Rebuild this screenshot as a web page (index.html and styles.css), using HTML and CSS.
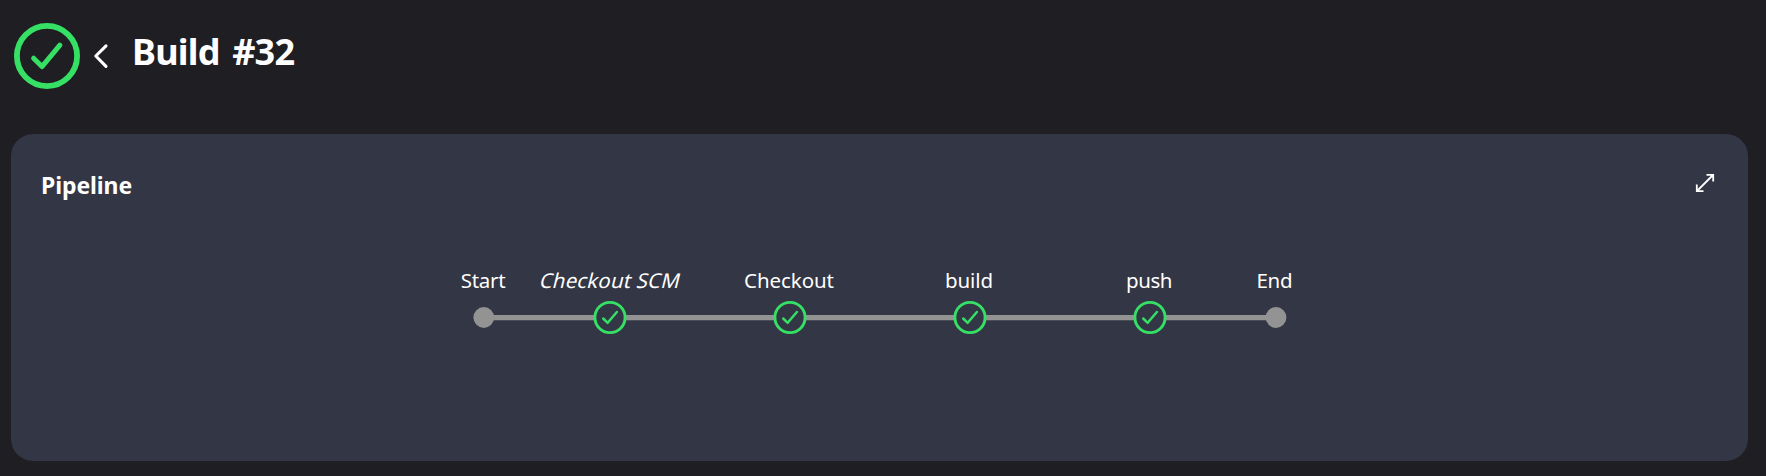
FILE: index.html
```html
<!DOCTYPE html>
<html lang="en">
<head>
<meta charset="utf-8">
<title>Build #32</title>
<link rel="stylesheet" href="styles.css">
</head>
<body>
<header class="build-header">
  <svg class="status-icon" viewBox="0 0 66 66" fill="none">
    <circle cx="33" cy="33" r="30.1" stroke-width="5.8"/>
    <path d="M19.6 35.2 28 43.6 45.9 22.1" stroke-width="5"/>
  </svg>
  <svg class="back-icon" viewBox="0 0 16 26" fill="none"><path d="M13 2.8 2.8 13 13 23.4"/></svg>
  <h1 class="build-title">Build #32</h1>
</header>
<main class="card">
  <div class="card-header">
    <h2 class="card-title">Pipeline</h2>
    <svg class="expand-icon" viewBox="0 0 20 20" fill="none"><path d="M2 18 18 2M11.5 1.8H18.2V8.5M1.8 11.5V18.2H8.5"/></svg>
  </div>
  <svg class="graph" viewBox="0 0 840 80">
    <defs>
      <g id="success">
        <circle class="ring" r="15.1"/>
        <path class="check" d="M-6.8 1-2.3 5.3 6.9-5.5"/>
      </g>
    </defs>
    <path class="edge" d="M33.8 56.6H826"/>
    <circle class="dot" cx="33.8" cy="56.5" r="10.4"/>
    <circle class="dot" cx="826" cy="56.5" r="10.4"/>
    <use href="#success" x="160" y="56.5"/>
    <use href="#success" x="340" y="56.5"/>
    <use href="#success" x="520" y="56.5"/>
    <use href="#success" x="700" y="56.5"/>
    <g class="labels">
      <text x="10.7" y="27" textLength="45">Start</text>
      <text transform="translate(88.5 27) skewX(-14)" textLength="140">Checkout SCM</text>
      <text x="294" y="27" textLength="90">Checkout</text>
      <text x="495" y="27" textLength="48">build</text>
      <text x="676" y="27" textLength="46.5">push</text>
      <text x="806.5" y="27" textLength="36">End</text>
    </g>
  </svg>
</main>
</body>
</html>
```
FILE: styles.css
```css
* { box-sizing: border-box; }
body {
  margin: 0;
  height: 476px;
  overflow: hidden;
  background: #1f1e23;
  color: #fff;
  font-family: "Noto Sans", sans-serif;
}
.build-header {
  display: flex;
  align-items: flex-start;
  height: 134px;
  padding: 23px 0 0 14px;
}
.status-icon {
  width: 66px;
  height: 66px;
  stroke: #35e065;
  stroke-linecap: round;
  stroke-linejoin: round;
}
.back-icon {
  width: 16px;
  height: 26px;
  margin: 20px 0 0 13px;
  stroke: #fff;
  stroke-width: 3.1;
  stroke-linecap: round;
  stroke-linejoin: round;
}
.build-title {
  margin: 5px 0 0 23px;
  font-size: 36px;
  line-height: 48px;
  font-weight: 700;
  letter-spacing: -0.8px;
  word-spacing: 4px;
}
.card {
  width: 1737px;
  height: 327px;
  margin-left: 11px;
  padding: 34px 33px 0 30px;
  border-radius: 22px;
  background: #333644;
}
.card-header {
  display: flex;
  justify-content: space-between;
  align-items: flex-start;
  height: 92.5px;
}
.card-title {
  margin: 0;
  font-size: 23px;
  line-height: 35px;
  font-weight: 700;
  letter-spacing: -0.1px;
}
.expand-icon {
  width: 20px;
  height: 20px;
  margin-top: 5px;
  stroke: #fff;
  stroke-width: 1.8;
}
.graph {
  display: block;
  width: 840px;
  height: 80px;
  margin-left: 409px;
  overflow: visible;
}
.edge { stroke: #949393; stroke-width: 5.3; }
.dot { fill: #949393; }
.ring { fill: #333644; stroke: #35e065; stroke-width: 2.9; }
.check {
  fill: none;
  stroke: #35e065;
  stroke-width: 2.5;
  stroke-linecap: round;
  stroke-linejoin: round;
}
.labels { fill: #fff; font-size: 20.5px; }
```
